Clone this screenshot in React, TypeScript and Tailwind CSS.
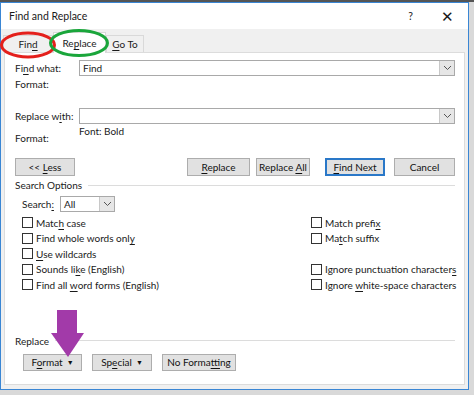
import type { ReactNode } from 'react';

const font = { fontFamily: 'Lato, "Noto Sans", "Liberation Sans", sans-serif' };

// text with one underlined access key
function K({ t, k }: { t: string; k: number }) {
  return (
    <span className="whitespace-pre">
      {t.slice(0, k)}
      <span className="underline underline-offset-2">{t[k]}</span>
      {t.slice(k + 1)}
    </span>
  );
}

function Btn({ children, w, primary }: { children: ReactNode; w: string; primary?: boolean }) {
  return (
    <div
      className={`${w} h-full shrink-0 flex items-center justify-center whitespace-nowrap bg-[#e1e1e1] text-[#111] ${
        primary ? 'border-2 border-[#2a78c8]' : 'border border-[#adadad]'
      }`}
    >
      {children}
    </div>
  );
}

function Chevron() {
  return (
    <svg width="9" height="6" viewBox="0 0 9 6">
      <path d="M1 1 L4.5 4.5 L8 1" fill="none" stroke="#555" strokeWidth="1" />
    </svg>
  );
}

function Combo({ value, w }: { value: string; w: string }) {
  return (
    <div className={`${w} h-full flex border border-[#a9a9a9] bg-white`}>
      <div className="flex-1 flex items-center pl-[3px]">{value}</div>
      <div className="w-[15px] flex items-center justify-center bg-[#e6e6e6] border-l border-[#c8c8c8]">
        <Chevron />
      </div>
    </div>
  );
}

function Check({ children }: { children: ReactNode }) {
  return (
    <div className="h-[15.5px] flex items-center gap-[3px] whitespace-nowrap">
      <div className="w-[11px] h-[11px] shrink-0 border border-[#333] bg-white" />
      {children}
    </div>
  );
}

function Annotations() {
  return (
    <svg className="absolute left-0 top-0 pointer-events-none" width="474" height="395">
      <ellipse cx="28" cy="45" rx="26.5" ry="12" fill="none" stroke="#e4201c" strokeWidth="3" />
      <ellipse cx="79" cy="43" rx="28.5" ry="12.5" fill="none" stroke="#1aa63b" strokeWidth="3" />
      <rect x="57" y="310" width="20" height="25" fill="#a23aa9" />
      <polygon points="51,333 84,333 68,357" fill="#a23aa9" />
    </svg>
  );
}

export default function App() {
  return (
    <div className="relative w-[474px] h-[395px] overflow-hidden bg-[#d9d9d9] text-[10px] leading-[14px] text-[#1a1a1a]" style={font}>
      <div className="h-[2px] bg-[#555]" />
      <div className="w-[469px] h-[388px] border border-[#3a86d4] bg-[#f0f0f0] flex flex-col">
        {/* title bar */}
        <div className="h-[26px] bg-white flex items-center pl-[8px] pr-[14px] text-[10.5px]">
          <span className="flex-1">Find and Replace</span>
          <span className="mr-[28px]">?</span>
          <span className="text-[15px] font-light">✕</span>
        </div>

        {/* tabs */}
        <div className="h-[23px] flex items-end pl-[2px]">
          <div className="w-[50px] h-[17px] flex items-center justify-center border border-b-0 border-[#d9d9d9] bg-[#f0f0f0]">
            <K t="Find" k={3} />
          </div>
          <div className="w-[53px] h-[21px] flex items-center justify-center border border-b-0 border-[#d9d9d9] bg-white relative top-[1px]">
            <K t="Replace" k={2} />
          </div>
          <div className="w-[38px] h-[17px] flex items-center justify-center border border-b-0 border-[#d9d9d9] bg-[#f0f0f0]">
            <K t="Go To" k={0} />
          </div>
        </div>

        {/* panel */}
        <div className="flex-1 mx-[3px] mb-[4px] bg-white border border-[#dcdcdc] pl-[10px] pr-[9px] flex flex-col">
          <div className="h-[16px] mt-[7px] flex items-center">
            <span className="w-[64px] shrink-0"><K t="Find what:" k={2} /></span>
            <Combo value="Find" w="flex-1" />
          </div>
          <div className="h-[16px] flex items-center">Format:</div>

          <div className="h-[16px] mt-[16px] flex items-center">
            <span className="w-[64px] shrink-0"><K t="Replace with:" k={9} /></span>
            <Combo value="" w="flex-1" />
          </div>
          <div className="h-[22px] flex">
            <span className="w-[64px] shrink-0 pt-[7px]">Format:</span>
            <span>Font: Bold</span>
          </div>

          <div className="h-[18px] mt-[12px] flex">
            <Btn w="w-[60px]"><K t="<< Less" k={3} /></Btn>
            <div className="flex-1" />
            <Btn w="w-[63px]"><K t="Replace" k={0} /></Btn>
            <div className="w-[6px]" />
            <Btn w="w-[54px]"><K t="Replace All" k={8} /></Btn>
            <div className="w-[15px]" />
            <Btn w="w-[60px]" primary><K t="Find Next" k={0} /></Btn>
            <div className="w-[9px]" />
            <Btn w="w-[61px]">Cancel</Btn>
          </div>

          <div className="h-[14px] mt-[2px] flex items-center">
            <span>Search Options</span>
            <div className="flex-1 h-px bg-[#dcdcdc] ml-[6px]" />
          </div>

          <div className="h-[16px] mt-[4px] pl-[7px] flex items-center">
            <span className="w-[38px] shrink-0"><K t="Search:" k={6} /></span>
            <Combo value="All" w="w-[55px]" />
          </div>

          <div className="mt-[3px] pl-[7px] flex">
            <div className="w-[289px] shrink-0">
              <Check><K t="Match case" k={4} /></Check>
              <Check><K t="Find whole words only" k={20} /></Check>
              <Check><K t="Use wildcards" k={0} /></Check>
              <Check><K t="Sounds like (English)" k={9} /></Check>
              <Check><K t="Find all word forms (English)" k={9} /></Check>
            </div>
            <div>
              <Check><K t="Match prefix" k={11} /></Check>
              <Check><K t="Match suffix" k={2} /></Check>
              <div className="h-[15.5px]" />
              <Check><K t="Ignore punctuation characters" k={28} /></Check>
              <Check><K t="Ignore white-space characters" k={7} /></Check>
            </div>
          </div>

          <div className="h-[14px] mt-[41px] flex items-center">
            <span>Replace</span>
            <div className="flex-1 h-px bg-[#dcdcdc] ml-[6px]" />
          </div>

          <div className="h-[17px] mt-[6px] pl-[8px] flex gap-[10px]">
            <Btn w="w-[59px]"><K t="Format" k={1} /><span className="text-[7px] ml-[4px]">▼</span></Btn>
            <Btn w="w-[60px]"><K t="Special" k={2} /><span className="text-[7px] ml-[4px]">▼</span></Btn>
            <Btn w="w-[74px]"><K t="No Formatting" k={8} /></Btn>
          </div>
        </div>
      </div>
      <Annotations />
    </div>
  );
}
